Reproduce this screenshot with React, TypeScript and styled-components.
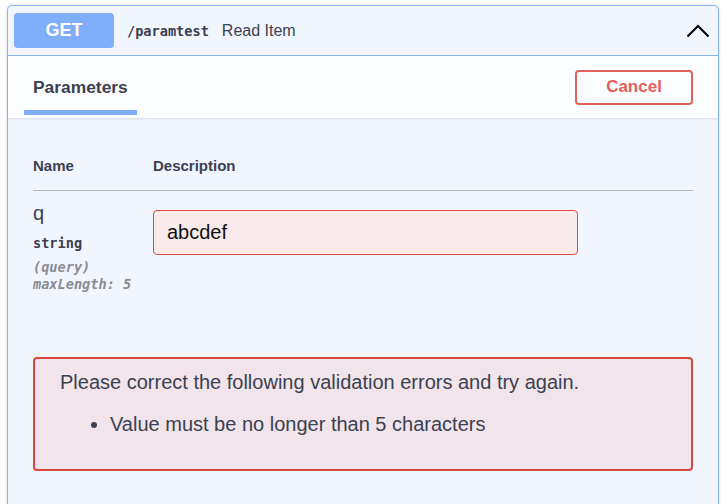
import React from "react";
import styled, { createGlobalStyle } from "styled-components";

const colors = {
    text: "#3b4151",
    blue: "#80aefb",
    blueBorder: "#8cb5f6",
    cardBg: "#f1f6fe",
    red: "#e0625a",
    errorBorder: "#d8473d",
    errorBg: "#f1e4ea",
    inputBg: "#f8eaea",
    muted: "#8a8c92",
};

const GlobalStyle = createGlobalStyle`
    html, body {
        margin: 0;
        padding: 0;
        background: #ffffff;
        font-family: "Liberation Sans", Arial, sans-serif;
        color: ${colors.text};
        overflow: hidden;
    }
`;

const Page = styled.div`
    padding: 5px 8px 0 7px;
`;

const Card = styled.div`
    border: 1px solid ${colors.blueBorder};
    border-radius: 5px;
    background: ${colors.cardBg};
    box-shadow: 0 0 3px rgba(0, 0, 0, 0.19);
    min-height: 540px;
`;

const Summary = styled.div`
    display: flex;
    align-items: center;
    height: 49px;
    padding: 0 8px 0 6px;
    border-bottom: 1px solid ${colors.blueBorder};
`;

const Method = styled.span`
    display: flex;
    align-items: center;
    justify-content: center;
    width: 100px;
    height: 35px;
    border-radius: 4px;
    background: ${colors.blue};
    color: #ffffff;
    font-size: 18px;
    font-weight: 700;
`;

const Path = styled.span`
    margin-left: 13px;
    font-family: "DejaVu Sans Mono", "Liberation Mono", monospace;
    font-size: 13.6px;
    font-weight: 700;
    color: ${colors.text};
`;

const OperationName = styled.span`
    margin-left: 13px;
    font-size: 16px;
    color: ${colors.text};
`;

const Toggle = styled.button`
    margin-left: auto;
    display: flex;
    padding: 0;
    border: none;
    background: transparent;
    cursor: pointer;
`;

const SectionHeader = styled.div`
    display: flex;
    align-items: center;
    justify-content: space-between;
    height: 62px;
    padding: 0 25px 0 16px;
    background: rgba(255, 255, 255, 0.8);
    box-shadow: 0 1px 2px rgba(0, 0, 0, 0.1);
`;

const Tab = styled.div`
    position: relative;
    display: flex;
    align-items: center;
    height: 100%;
    padding: 0 9px;
    font-size: 17.4px;
    font-weight: 700;

    &::after {
        content: "";
        position: absolute;
        left: 0;
        right: 0;
        bottom: 3px;
        height: 5px;
        background: ${colors.blue};
    }
`;

const CancelButton = styled.button`
    width: 118px;
    height: 35px;
    border: 2px solid ${colors.red};
    border-radius: 4px;
    background: transparent;
    color: ${colors.red};
    font-family: "Liberation Sans", Arial, sans-serif;
    font-size: 17px;
    font-weight: 700;
    cursor: pointer;
`;

const Body = styled.div`
    padding: 39px 25px 0 25px;
`;

const Row = styled.div<{ $head?: boolean }>`
    display: grid;
    grid-template-columns: 120px 1fr;
    align-items: start;
    ${(p) =>
        p.$head
            ? `
        padding-bottom: 15px;
        border-bottom: 1px solid #b3b6c0;
        font-size: 15px;
        font-weight: 700;
        line-height: 18px;
    `
            : `
        padding-top: 11px;
    `}
`;

const ParamName = styled.div`
    font-size: 20px;
    line-height: 23px;
`;

const Mono = styled.div<{ $muted?: boolean }>`
    font-family: "DejaVu Sans Mono", "Liberation Mono", monospace;
    font-size: 13.6px;
    ${(p) =>
        p.$muted
            ? `
        font-style: italic;
        font-weight: 700;
        color: ${colors.muted};
        line-height: 17px;
    `
            : `
        font-weight: 700;
        line-height: 16px;
        margin-top: 10px;
        margin-bottom: 8px;
    `}
`;

const ValueInput = styled.input<{ $invalid?: boolean }>`
    box-sizing: border-box;
    width: 425px;
    height: 45px;
    margin-top: 8px;
    padding: 0 13px;
    border: 1px solid ${(p) => (p.$invalid ? "#de4b40" : "#d9d9d9")};
    border-radius: 4px;
    background: ${(p) => (p.$invalid ? colors.inputBg : "#fff")};
    color: #111;
    font-family: "Liberation Sans", Arial, sans-serif;
    font-size: 20px;
    outline: none;
`;

const Errors = styled.div`
    margin-top: 64px;
    height: 114px;
    box-sizing: border-box;
    padding: 12px 25px 0 25px;
    border: 2px solid ${colors.errorBorder};
    border-radius: 4px;
    background: ${colors.errorBg};
    font-size: 20px;
    line-height: 23px;
    color: ${colors.text};
`;

const ErrorList = styled.ul`
    margin: 19px 0 0 0;
    padding-left: 50px;
`;

export default function App() {
    return (
        <>
            <GlobalStyle />
            <Page>
                <Card>
                    <Summary>
                        <Method>GET</Method>
                        <Path>/paramtest</Path>
                        <OperationName>Read Item</OperationName>
                        <Toggle aria-label="collapse">
                            <svg width="24" height="14" viewBox="0 0 24 14" fill="none">
                                <polyline
                                    points="1.5,12.5 12,2 22.5,12.5"
                                    stroke="#000"
                                    strokeWidth="2"
                                />
                            </svg>
                        </Toggle>
                    </Summary>
                    <SectionHeader>
                        <Tab>Parameters</Tab>
                        <CancelButton>Cancel</CancelButton>
                    </SectionHeader>
                    <Body>
                        <Row $head>
                            <div>Name</div>
                            <div>Description</div>
                        </Row>
                        <Row>
                            <div>
                                <ParamName>q</ParamName>
                                <Mono>string</Mono>
                                <Mono $muted>(query)</Mono>
                                <Mono $muted>maxLength: 5</Mono>
                            </div>
                            <div>
                                <ValueInput $invalid defaultValue="abcdef" />
                            </div>
                        </Row>
                        <Errors>
                            Please correct the following validation errors and try again.
                            <ErrorList>
                                <li>Value must be no longer than 5 characters</li>
                            </ErrorList>
                        </Errors>
                    </Body>
                </Card>
            </Page>
        </>
    );
}
